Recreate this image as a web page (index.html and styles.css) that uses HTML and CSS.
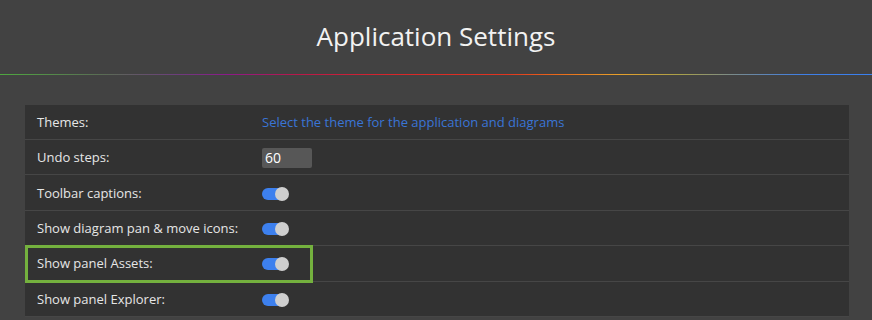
FILE: index.html
```html
<!DOCTYPE html>
<html>
<head>
<meta charset="utf-8">
<link rel="stylesheet" href="styles.css">
</head>
<body>
<header class="header">
  <h1 class="title">Application Settings</h1>
</header>
<div class="rainbow"></div>
<main class="settings">
  <div class="row">
    <div class="label">Themes:</div>
    <div class="value"><a class="link">Select the theme for the application and diagrams</a></div>
  </div>
  <div class="row">
    <div class="label">Undo steps:</div>
    <div class="value"><span class="num">60</span></div>
  </div>
  <div class="row">
    <div class="label">Toolbar captions:</div>
    <div class="value"><span class="toggle"><span class="knob"></span></span></div>
  </div>
  <div class="row">
    <div class="label">Show diagram pan &amp; move icons:</div>
    <div class="value"><span class="toggle"><span class="knob"></span></span></div>
  </div>
  <div class="row highlighted">
    <div class="label">Show panel Assets:</div>
    <div class="value"><span class="toggle"><span class="knob"></span></span></div>
    <div class="highlight"></div>
  </div>
  <div class="row">
    <div class="label">Show panel Explorer:</div>
    <div class="value"><span class="toggle"><span class="knob"></span></span></div>
  </div>
</main>
</body>
</html>
```
FILE: styles.css
```css
html, body {
  margin: 0;
  padding: 0;
  background: #424242;
  font-family: "Open Sans", "Noto Sans", sans-serif;
  overflow: hidden;
}
.header {
  height: 74px;
  display: flex;
  align-items: center;
  justify-content: center;
}
.title {
  margin: 0 0 2px 0;
  font-size: 26px;
  font-weight: 400;
  color: #f2f2f2;
  letter-spacing: 0;
}
.rainbow {
  height: 1px;
  background: linear-gradient(90deg, #4ea83f 0%, #5a6a55 12%, #6b3f7a 20%, #8b1a8a 26%, #b8184a 34%, #d8262a 45%, #e0351f 58%, #e86a1a 64%, #e7a02a 71%, #a8a04a 78%, #7a8a8a 84%, #3f7fe6 92%, #3a80f0 100%);
}
.settings {
  margin: 30px 23px 0 25px;
  background: #323232;
}
.row {
  position: relative;
  display: flex;
  align-items: center;
  height: 34.4px;
  border-bottom: 1px solid #464646;
  font-size: 13px;
}
.row:first-child {
  height: 34px;
}
.label {
  width: 225px;
  padding-left: 12px;
  color: #e6e6e6;
}
.value {
  display: flex;
  align-items: center;
}
.link {
  color: #3a75d6;
  cursor: pointer;
}
.num {
  display: block;
  width: 47px;
  height: 20px;
  line-height: 20px;
  padding-left: 3px;
  margin-top: 1px;
  background: #575757;
  border-radius: 2px;
  color: #ffffff;
  font-size: 14px;
}
.toggle {
  position: relative;
  display: block;
  width: 26px;
  height: 12px;
  border-radius: 6px;
  background: #3d80ee;
  margin-top: 2px;
}
.knob {
  position: absolute;
  right: -1px;
  top: -1px;
  width: 14px;
  height: 14px;
  border-radius: 50%;
  background: #cfcfcf;
}
.highlight {
  position: absolute;
  left: 0;
  top: -1px;
  width: 282px;
  height: 32px;
  border: 3px solid #74b13e;
}
```
